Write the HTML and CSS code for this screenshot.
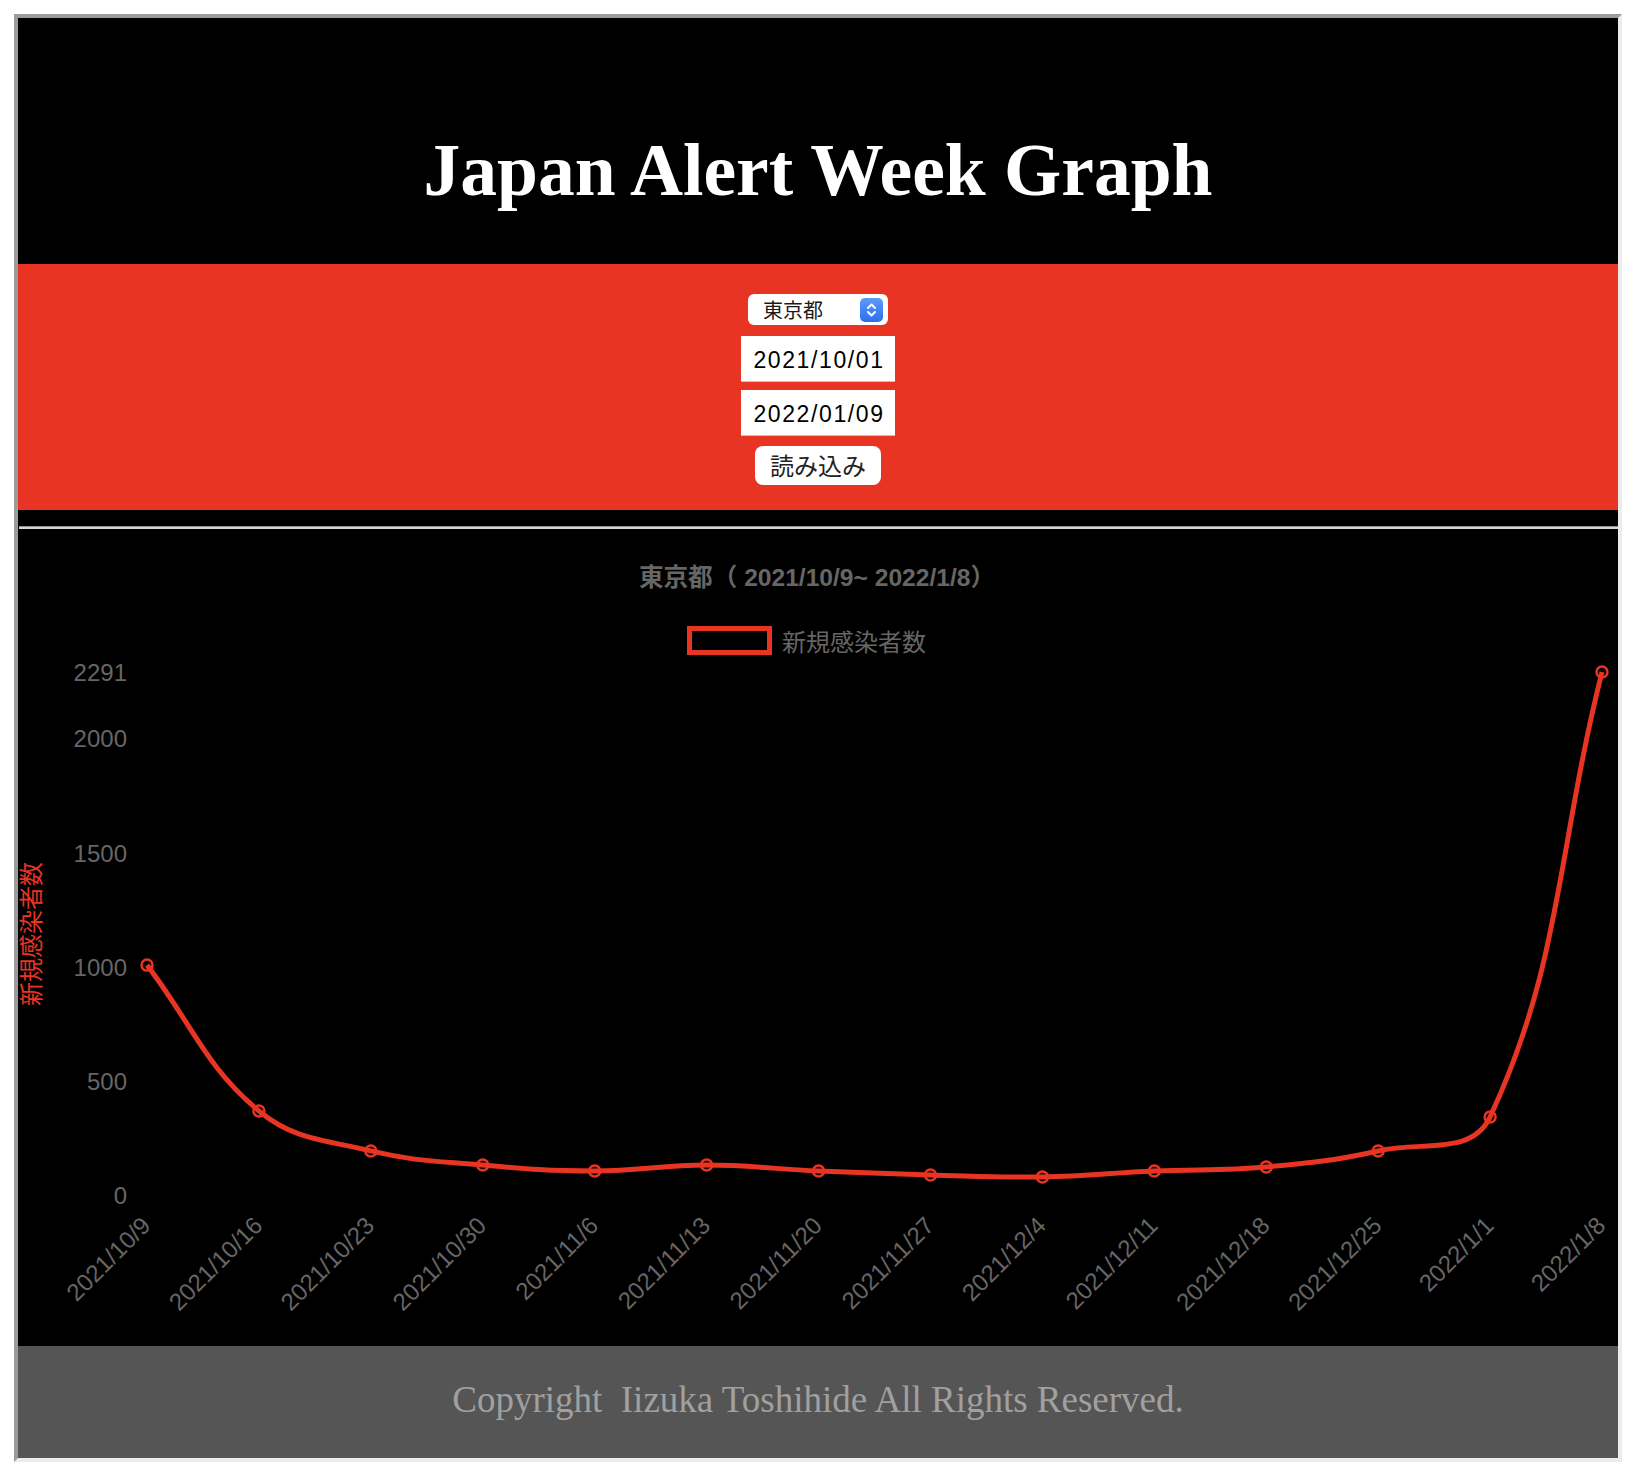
FILE: index.html
```html
<!DOCTYPE html>
<html lang="ja">
<head>
<meta charset="utf-8">
<title>Japan Alert Week Graph</title>
<link rel="stylesheet" href="styles.css">
</head>
<body>
<div class="frame">
  <header class="header">
    <h1 class="title">Japan Alert Week Graph</h1>
  </header>
  <form class="controls">
    <div class="select-wrap">
      <select class="pref"><option>東京都</option></select>
      <svg class="stepper" viewBox="0 0 23 24" aria-hidden="true">
        <defs>
          <linearGradient id="sg" x1="0" y1="0" x2="0" y2="1">
            <stop offset="0" stop-color="#5b9cf9"/>
            <stop offset="1" stop-color="#2d6fea"/>
          </linearGradient>
        </defs>
        <rect width="23" height="24" rx="5" fill="url(#sg)"/>
        <path d="M8 10 L11.5 6.5 L15 10 M8 14 L11.5 17.5 L15 14" fill="none" stroke="#fff" stroke-width="2" stroke-linecap="round" stroke-linejoin="round"/>
      </svg>
    </div>
    <input class="date" type="text" value="2021/10/01">
    <input class="date" type="text" value="2022/01/09">
    <button type="button" class="load">読み込み</button>
  </form>
  <div class="divider"><div class="rule"></div></div>
  <section class="chart">
    <svg id="plot" class="plot" width="1600" height="817" viewBox="0 0 1600 817">
      <text class="c-title" x="799" y="48" text-anchor="middle" dominant-baseline="central">東京都（ 2021/10/9~ 2022/1/8）</text>
      <rect class="legend-box" x="671.5" y="99.5" width="80" height="24"/>
      <text class="c-text" x="764" y="113" dominant-baseline="central">新規感染者数</text>

      <text class="c-text" x="109" y="143" text-anchor="end" dominant-baseline="central">2291</text>
      <text class="c-text" x="109" y="209" text-anchor="end" dominant-baseline="central">2000</text>
      <text class="c-text" x="109" y="324" text-anchor="end" dominant-baseline="central">1500</text>
      <text class="c-text" x="109" y="438" text-anchor="end" dominant-baseline="central">1000</text>
      <text class="c-text" x="109" y="552" text-anchor="end" dominant-baseline="central">500</text>
      <text class="c-text" x="109" y="666" text-anchor="end" dominant-baseline="central">0</text>

      <text class="y-title" x="13" y="405" text-anchor="middle" dominant-baseline="central" transform="rotate(-90 13 405)">新規感染者数</text>

      <text class="c-text" x="128" y="692" text-anchor="end" dominant-baseline="central" transform="rotate(-45 128 692)">2021/10/9</text>
      <text class="c-text" x="239.9" y="692" text-anchor="end" dominant-baseline="central" transform="rotate(-45 239.9 692)">2021/10/16</text>
      <text class="c-text" x="351.8" y="692" text-anchor="end" dominant-baseline="central" transform="rotate(-45 351.8 692)">2021/10/23</text>
      <text class="c-text" x="463.8" y="692" text-anchor="end" dominant-baseline="central" transform="rotate(-45 463.8 692)">2021/10/30</text>
      <text class="c-text" x="575.7" y="692" text-anchor="end" dominant-baseline="central" transform="rotate(-45 575.7 692)">2021/11/6</text>
      <text class="c-text" x="687.6" y="692" text-anchor="end" dominant-baseline="central" transform="rotate(-45 687.6 692)">2021/11/13</text>
      <text class="c-text" x="799.5" y="692" text-anchor="end" dominant-baseline="central" transform="rotate(-45 799.5 692)">2021/11/20</text>
      <text class="c-text" x="911.5" y="692" text-anchor="end" dominant-baseline="central" transform="rotate(-45 911.5 692)">2021/11/27</text>
      <text class="c-text" x="1023.4" y="692" text-anchor="end" dominant-baseline="central" transform="rotate(-45 1023.4 692)">2021/12/4</text>
      <text class="c-text" x="1135.3" y="692" text-anchor="end" dominant-baseline="central" transform="rotate(-45 1135.3 692)">2021/12/11</text>
      <text class="c-text" x="1247.2" y="692" text-anchor="end" dominant-baseline="central" transform="rotate(-45 1247.2 692)">2021/12/18</text>
      <text class="c-text" x="1359.2" y="692" text-anchor="end" dominant-baseline="central" transform="rotate(-45 1359.2 692)">2021/12/25</text>
      <text class="c-text" x="1471.1" y="692" text-anchor="end" dominant-baseline="central" transform="rotate(-45 1471.1 692)">2022/1/1</text>
      <text class="c-text" x="1583" y="692" text-anchor="end" dominant-baseline="central" transform="rotate(-45 1583 692)">2022/1/8</text>
    </svg>
  </section>
  <footer class="footer">Copyright&nbsp; Iizuka Toshihide All Rights Reserved.</footer>
</div>
<script src="script.js"></script>
</body>
</html>
```

FILE: styles.css
```css
html, body {
  background: #fff;
}
body {
  margin: 14px 0 0 14px;
}
.frame {
  width: 1600px;
  border-style: solid;
  border-width: 4px;
  border-color: #9b9b9b #ececec #ececec #9b9b9b;
  background: #000;
}
.header {
  background: #000;
  height: 246px;
  box-sizing: border-box;
  padding-top: 113px;
}
.title {
  margin: 0;
  font-family: "Liberation Serif", serif;
  font-weight: bold;
  font-size: 73.5px;
  line-height: 80px;
  color: #fff;
  text-align: center;
}
.controls {
  background: #e83423;
  height: 246px;
  box-sizing: border-box;
  padding-top: 30px;
  margin: 0;
  display: flex;
  flex-direction: column;
  align-items: center;
}
.select-wrap {
  position: relative;
  width: 140px;
  height: 31px;
}
.pref {
  -webkit-appearance: none;
  appearance: none;
  display: block;
  width: 140px;
  height: 31px;
  margin: 0;
  border: none;
  border-radius: 6px;
  background: #fff;
  padding: 0 0 0 15px;
  font-family: "Noto Sans CJK JP", sans-serif;
  font-size: 20px;
  color: #1a1a1a;
}
.stepper {
  position: absolute;
  right: 5px;
  top: 4px;
  width: 23px;
  height: 24px;
}
.date {
  display: block;
  margin: 11px 0 0;
  width: 154px;
  height: 46px;
  box-sizing: border-box;
  border: none;
  border-bottom: 1px solid #c4c4c4;
  background: #fff;
  padding: 3px 0 0 2px;
  text-align: center;
  font-family: "Liberation Sans", sans-serif;
  font-size: 23px;
  letter-spacing: 1.6px;
  color: #000;
}
.date + .date {
  margin-top: 8px;
}
.load {
  margin-top: 10px;
  width: 126px;
  height: 39px;
  border: none;
  border-radius: 8px;
  background: #fff;
  padding: 0 0 2px;
  font-family: "Noto Sans CJK JP", sans-serif;
  font-size: 24px;
  line-height: 1;
  color: #222;
}
.divider {
  height: 19px;
  box-sizing: border-box;
  padding-top: 16px;
  background: #000;
}
.rule {
  height: 2px;
  border-top: 1px solid #8e8e8e;
  background: #d6d6d6;
  margin-left: 1px;
}
.chart {
  height: 817px;
  background: #000;
}
.plot {
  display: block;
}
.c-title {
  fill: #666;
  font-family: "Liberation Sans", "Noto Sans CJK JP", sans-serif;
  font-weight: bold;
  font-size: 24.6px;
}
.c-text {
  fill: #666;
  font-family: "Liberation Sans", "Noto Sans CJK JP", sans-serif;
  font-size: 24px;
}
.y-title {
  fill: #e83423;
  font-family: "Liberation Sans", "Noto Sans CJK JP", sans-serif;
  font-size: 24px;
}
.legend-box {
  fill: none;
  stroke: #e83423;
  stroke-width: 5;
}
.line {
  fill: none;
  stroke: #e83423;
  stroke-width: 5;
  stroke-linejoin: round;
}
.pt {
  fill: none;
  stroke: #e83423;
  stroke-width: 2.5;
}
.footer {
  background: #555;
  height: 112px;
  line-height: 108px;
  text-align: center;
  color: #a0a0a0;
  font-family: "Liberation Serif", serif;
  font-size: 37px;
}
```

FILE: script.js
```javascript
(function () {
  var NS = 'http://www.w3.org/2000/svg';
  var svg = document.getElementById('plot');
  var vals = [1007, 368, 193, 131, 105, 131, 105, 88, 79, 105, 123, 193, 342, 2291];
  var x0 = 129, step = 111.923, yBase = 666, k = 0.22828;
  var top = 143, bottom = 666, left = 129, right = 1584;
  var pts = vals.map(function (v, i) {
    return { x: x0 + i * step, y: yBase - v * k };
  });
  function clamp(v, a, b) { return Math.max(a, Math.min(b, v)); }
  var cps = pts.map(function (p, i) {
    var prev = pts[i - 1] || p;
    var next = pts[i + 1] || p;
    var d01 = Math.hypot(p.x - prev.x, p.y - prev.y);
    var d12 = Math.hypot(next.x - p.x, next.y - p.y);
    var s01 = d01 / (d01 + d12);
    var s12 = d12 / (d01 + d12);
    if (!isFinite(s01)) s01 = 0;
    if (!isFinite(s12)) s12 = 0;
    var fa = 0.4 * s01, fb = 0.4 * s12;
    return {
      px: clamp(p.x - fa * (next.x - prev.x), left, right),
      py: clamp(p.y - fa * (next.y - prev.y), top, bottom),
      nx: clamp(p.x + fb * (next.x - prev.x), left, right),
      ny: clamp(p.y + fb * (next.y - prev.y), top, bottom)
    };
  });
  var d = 'M' + pts[0].x.toFixed(2) + ' ' + pts[0].y.toFixed(2);
  for (var i = 1; i < pts.length; i++) {
    d += ' C' + cps[i - 1].nx.toFixed(2) + ' ' + cps[i - 1].ny.toFixed(2) + ' ' +
      cps[i].px.toFixed(2) + ' ' + cps[i].py.toFixed(2) + ' ' +
      pts[i].x.toFixed(2) + ' ' + pts[i].y.toFixed(2);
  }
  var path = document.createElementNS(NS, 'path');
  path.setAttribute('class', 'line');
  path.setAttribute('d', d);
  svg.appendChild(path);
  pts.forEach(function (p) {
    var c = document.createElementNS(NS, 'circle');
    c.setAttribute('class', 'pt');
    c.setAttribute('cx', p.x.toFixed(2));
    c.setAttribute('cy', p.y.toFixed(2));
    c.setAttribute('r', '5.5');
    svg.appendChild(c);
  });
})();
```
